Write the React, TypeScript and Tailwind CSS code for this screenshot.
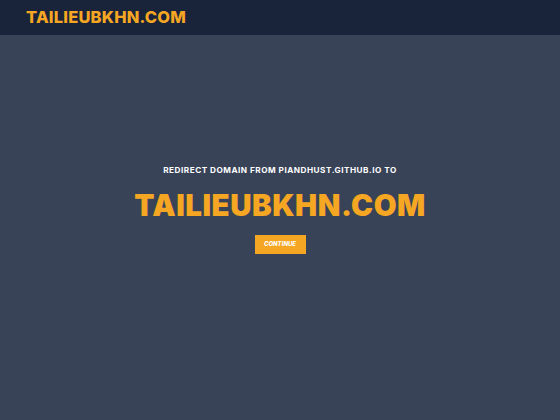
export default function App() {
  const font = { fontFamily: "Inter, 'Noto Sans', sans-serif" };
  return (
    <div className="w-[560px] h-[420px] bg-[#384358] flex flex-col" style={font}>
      <header className="h-[35px] bg-[#19233a] flex items-center px-[26px]">
        <span className="text-[#f5a623] text-[16.5px] font-extrabold tracking-[0.2px] leading-none">TAILIEUBKHN.COM</span>
      </header>
      <main className="flex-1 flex flex-col items-center pt-[131px]">
        <p className="text-white text-[8.2px] font-bold tracking-[0.5px] leading-none">REDIRECT DOMAIN FROM PIANDHUST.GITHUB.IO TO</p>
        <h1 className="mt-[17px] text-[#f5a623] text-[29.5px] font-black leading-none tracking-[0.5px]">TAILIEUBKHN.COM</h1>
        <button className="mt-[14px] w-[51px] h-[19px] bg-[#f5a623] text-white text-[6px] font-extrabold italic leading-none">CONTINUE</button>
      </main>
    </div>
  );
}
